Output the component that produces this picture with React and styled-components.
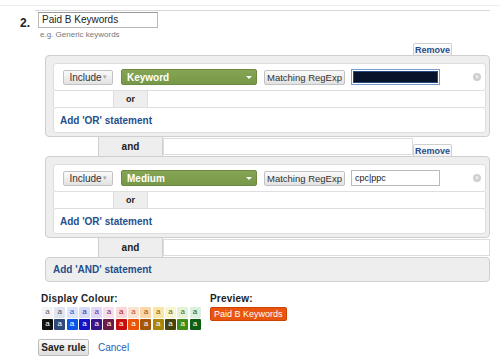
import React from 'react'
import styled, { createGlobalStyle } from 'styled-components'

const Global = createGlobalStyle`
  body {
    margin: 0;
    background: #fff;
    font-family: "Liberation Sans", Arial, sans-serif;
    font-size: 10px;
    color: #222;
  }
`

const Page = styled.div`
  width: 500px;
  height: 361px;
  overflow: hidden;
  position: relative;
`

const FaintRule = styled.div`
  margin-top: 5px;
  height: 1px;
  background: #ececec;
`

const Rule = styled.div`
  margin: 4px 10px 0 35px;
  height: 1px;
  background: #d8d8d8;
`

const Step = styled.div`
  display: flex;
`

const StepNumber = styled.div`
  width: 18px;
  padding-left: 20px;
  padding-top: 5px;
  font-size: 12px;
  font-weight: bold;
`

const StepBody = styled.div`
  flex: 1;
  padding-top: 1px;
`

const NameInput = styled.div`
  width: 115px;
  height: 14px;
  border: 1px solid #b9b9b9;
  border-top-color: #999;
  padding: 0 0 0 3px;
  line-height: 14px;
  font-size: 10px;
`

const Hint = styled.div`
  margin: 2px 0 0 2px;
  font-size: 8px;
  color: #777;
`

const Conditions = styled.div`
  margin: 4px 10px 0 7px;
`

const TabRow = styled.div`
  display: flex;
  justify-content: flex-end;
  padding-right: 38px;
  height: 12px;
`

const RemoveTab = styled.div`
  width: 39px;
  height: 12px;
  box-sizing: border-box;
  border: 1px solid #cfcfcf;
  border-bottom: none;
  border-radius: 2px 2px 0 0;
  background: linear-gradient(#fff, #f1f1f1);
  color: #1f4f8c;
  font-weight: bold;
  font-size: 9px;
  text-align: center;
  line-height: 12px;
`

const Block = styled.div`
  background: #eeeeee;
  border: 1px solid #cfcfcf;
  border-radius: 4px;
  padding: 7px 3px 3px 7px;
`

const RuleRow = styled.div`
  height: 26px;
  background: #fff;
  border: 1px solid #dedede;
  border-radius: 3px;
  display: flex;
  align-items: center;
  padding-left: 9px;
`

const GrayButton = styled.div`
  height: 15px;
  box-sizing: border-box;
  border: 1px solid #c2c2c2;
  border-radius: 2px;
  background: linear-gradient(#fafafa, #e2e2e2);
  display: flex;
  align-items: center;
  justify-content: center;
  white-space: nowrap;
  width: ${p => p.$w}px;
  margin-right: ${p => p.$mr || 0}px;
  color: #333;
  font-size: ${p => p.$fs || 10}px;
`

const Caret = styled.span`
  color: #aaa;
  font-size: 7px;
  margin-left: 1px;
`

const Dimension = styled.div`
  width: 136px;
  height: 16px;
  box-sizing: border-box;
  margin-right: 7px;
  background: linear-gradient(#85a555, #779848);
  border: 1px solid #6c8b40;
  border-radius: 2px;
  color: #fff;
  font-weight: bold;
  font-size: 10px;
  display: flex;
  align-items: center;
  justify-content: space-between;
  padding: 0 4px 0 5px;
`

const WhiteCaret = styled.span`
  width: 0;
  height: 0;
  border-left: 3px solid transparent;
  border-right: 3px solid transparent;
  border-top: 3px solid #fff;
`

const ValueInput = styled.div`
  width: 89px;
  height: 16px;
  box-sizing: border-box;
  border: 1px solid ${p => (p.$hidden ? '#7b9cc8' : '#b9b9b9')};
  background: #fff;
  padding: ${p => (p.$hidden ? '1px' : '0 3px')};
  font-size: 9px;
  line-height: 14px;
`

const Redacted = styled.div`
  width: 100%;
  height: 100%;
  background: #07122b;
  border: 1px solid #244a86;
  box-sizing: border-box;
`

const ClearIcon = styled.div`
  margin-left: auto;
  margin-right: 4px;
  width: 8px;
  height: 8px;
  border-radius: 50%;
  background: #cfcfcf;
  color: #fff;
  font-size: 7px;
  line-height: 8px;
  text-align: center;
`

const OrRow = styled.div`
  display: flex;
  height: 16px;
`

const OrSide = styled.div`
  background: #fff;
  border: 1px solid #dedede;
  border-top: none;
  border-bottom: none;
  width: ${p => (p.$w ? `${p.$w}px` : 'auto')};
  flex: ${p => (p.$w ? 'none' : 1)};
`

const OrLabel = styled.div`
  width: 33px;
  text-align: center;
  font-weight: bold;
  font-size: 9px;
  line-height: 16px;
`

const AddLink = styled.div`
  color: #1f4f8c;
  font-weight: bold;
  font-size: 10px;
`

const AddOr = styled.div`
  height: 24px;
  background: #fff;
  border: 1px solid #dedede;
  border-radius: 3px;
  display: flex;
  align-items: center;
  padding-left: 6px;
`

const AndRow = styled.div`
  display: flex;
  height: 19px;
  align-items: stretch;
`

const AndGap = styled.div`
  width: 53px;
`

const AndLabel = styled.div`
  width: 63px;
  background: #eeeeee;
  border-left: 1px solid #cfcfcf;
  border-right: 1px solid #cfcfcf;
  text-align: center;
  font-weight: bold;
  font-size: 10px;
  line-height: 19px;
`

const AndFill = styled.div`
  flex: 1;
  margin: 1px 0;
  border: 1px solid #dcdcdc;
`

const AndTab = styled.div`
  align-self: flex-end;
  margin-right: 38px;
`

const AddAnd = styled.div`
  height: 23px;
  background: #eeeeee;
  border: 1px solid #cfcfcf;
  border-radius: 4px;
  display: flex;
  align-items: center;
  padding-left: 7px;
`

const Appearance = styled.div`
  display: flex;
  margin: 11px 0 0 3px;
`

const ColourCol = styled.div`
  width: 169px;
`

const Heading = styled.div`
  font-weight: bold;
  font-size: 10px;
  letter-spacing: 0.2px;
  height: 12px;
`

const Swatches = styled.div`
  display: grid;
  grid-template-columns: repeat(13, 11px);
  column-gap: 1.3px;
  row-gap: 1px;
  margin: 2px 0 0 1px;
`

const Swatch = styled.div`
  height: 11px;
  background: ${p => p.$bg};
  color: ${p => p.$fg};
  font-size: 8px;
  line-height: 10px;
  text-align: center;
  border-radius: 1px;
`

const Badge = styled.div`
  display: inline-block;
  margin-top: 2px;
  background: #e8550f;
  border: 1px solid #cf4100;
  border-radius: 2px;
  color: #fff;
  font-size: 9px;
  padding: 0 3px;
  line-height: 12px;
`

const Actions = styled.div`
  display: flex;
  align-items: center;
  margin-top: 9px;
`

const SaveButton = styled.div`
  width: 51px;
  height: 17px;
  box-sizing: border-box;
  border: 1px solid #bdbdbd;
  border-radius: 2px;
  background: linear-gradient(#fafafa, #dedede);
  font-weight: bold;
  font-size: 10px;
  display: flex;
  align-items: center;
  justify-content: center;
  margin-right: 9px;
`

const Cancel = styled.div`
  color: #2a5db0;
  font-size: 10px;
`

const light = [
  ['#f4f4f4', '#666'], ['#dfe5f0', '#556'], ['#dbe6fb', '#2a5bd0'], ['#d6dbf8', '#2230b0'],
  ['#e2d6f8', '#5a2aa0'], ['#f5dfea', '#8a3060'], ['#f8d8d8', '#b02020'], ['#fbe3d2', '#c05010'],
  ['#fbd6a8', '#905010'], ['#fae6a8', '#806010'], ['#f8f6cf', '#606020'], ['#e6f2d6', '#407020'],
  ['#dceedc', '#205a20'],
]

const dark = [
  '#111', '#2f4a78', '#0d55e6', '#1414c4', '#3a1386', '#6a1c44', '#c70d0d',
  '#e9530a', '#a6560b', '#a88609', '#45450b', '#3f8e16', '#0d5d14',
]

const Condition = ({ field, value }) => (
  <Block>
    <RuleRow>
      <GrayButton $w={50} $mr={8}>Include<Caret>▾</Caret></GrayButton>
      <Dimension>{field}<WhiteCaret /></Dimension>
      <GrayButton $w={81} $mr={6} $fs={9.5}>Matching RegExp</GrayButton>
      {value ? (
        <ValueInput>{value}</ValueInput>
      ) : (
        <ValueInput $hidden><Redacted /></ValueInput>
      )}
      <ClearIcon>×</ClearIcon>
    </RuleRow>
    <OrRow>
      <OrSide $w={59} />
      <OrLabel>or</OrLabel>
      <OrSide />
    </OrRow>
    <AddOr><AddLink>Add 'OR' statement</AddLink></AddOr>
  </Block>
)

const And = ({ remove }) => (
  <AndRow>
    <AndGap />
    <AndLabel>and</AndLabel>
    <AndFill />
    {remove && <AndTab><RemoveTab>Remove</RemoveTab></AndTab>}
  </AndRow>
)

export default function App() {
  return (
    <Page>
      <Global />
      <FaintRule />
      <Rule />
      <Step>
        <StepNumber>2.</StepNumber>
        <StepBody>
          <NameInput>Paid B Keywords</NameInput>
          <Hint>e.g. Generic keywords</Hint>
          <Conditions>
            <TabRow><RemoveTab>Remove</RemoveTab></TabRow>
            <Condition field="Keyword" />
            <And remove />
            <Condition field="Medium" value="cpc|ppc" />
            <And />
            <AddAnd><AddLink>Add 'AND' statement</AddLink></AddAnd>
          </Conditions>
          <Appearance>
            <ColourCol>
              <Heading>Display Colour:</Heading>
              <Swatches>
                {light.map(([bg, fg], i) => (
                  <Swatch key={`l${i}`} $bg={bg} $fg={fg}>a</Swatch>
                ))}
                {dark.map((bg, i) => (
                  <Swatch key={`d${i}`} $bg={bg} $fg="#fff">a</Swatch>
                ))}
              </Swatches>
            </ColourCol>
            <div>
              <Heading>Preview:</Heading>
              <Badge>Paid B Keywords</Badge>
            </div>
          </Appearance>
          <Actions>
            <SaveButton>Save rule</SaveButton>
            <Cancel>Cancel</Cancel>
          </Actions>
        </StepBody>
      </Step>
    </Page>
  )
}
